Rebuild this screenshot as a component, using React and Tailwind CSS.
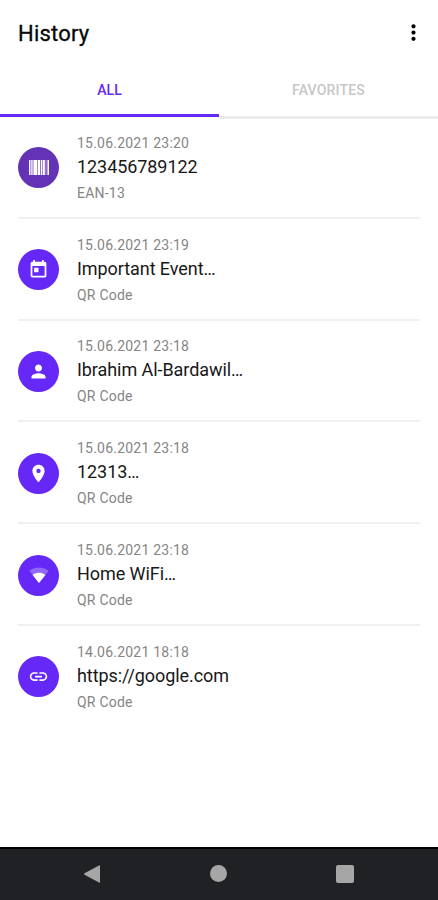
import React from "react";
import { MdMoreVert, MdToday, MdPerson, MdPlace, MdLink } from "react-icons/md";

function Barcode() {
  return (
    <svg width="20" height="15" viewBox="0 0 20 15" fill="#fff">
      <path fillOpacity=".3" d="M0 0h20v15H0z" />
      <path d="M0 0h1.300v15H0zM2.300 0h1.200v15H2.300zM4.500 0h3.500v15H4.500zM8.800 0h2.200v15H8.800zM12 0h1.200v15H12zM14 0h1.800v15H14zM18.600 0H20v15h-1.400z" />
    </svg>
  );
}

function Wifi() {
  return (
    <svg width="20" height="20" viewBox="0 0 24 24" fill="#fff">
      <path fillOpacity=".3" d="M12 21.500 23.600 7C23.200 6.700 18.700 3 12 3S.8 6.700.4 7z" />
      <path d="M4.300 12 12 21.500 19.700 12C19.300 11.700 16.400 9.300 12 9.300S4.700 11.700 4.300 12z" />
    </svg>
  );
}

const items = [
  { date: "15.06.2021 23:20", title: "123456789122", kind: "EAN-13", icon: <Barcode />, bg: "bg-[#6433b5]" },
  { date: "15.06.2021 23:19", title: "Important Event…", kind: "QR Code", icon: <MdToday size={21} />, bg: "bg-[#6528f7]" },
  { date: "15.06.2021 23:18", title: "Ibrahim Al-Bardawil…", kind: "QR Code", icon: <MdPerson size={21} />, bg: "bg-[#6528f7]" },
  { date: "15.06.2021 23:18", title: "12313…", kind: "QR Code", icon: <MdPlace size={21} />, bg: "bg-[#6528f7]" },
  { date: "15.06.2021 23:18", title: "Home WiFi…", kind: "QR Code", icon: <Wifi />, bg: "bg-[#6528f7]" },
  { date: "14.06.2021 18:18", title: "https://google.com", kind: "QR Code", icon: <MdLink size={21} />, bg: "bg-[#6528f7]" },
];

export default function App() {
  return (
    <div className="flex h-[900px] w-[438px] flex-col overflow-hidden bg-white font-[Roboto,sans-serif]">
      <header className="flex h-[64px] shrink-0 items-center justify-between pl-[18px] pr-[12px]">
        <h1 className="pt-[3px] text-[22px] leading-[26px] tracking-[0.2px] text-[#080808] [-webkit-text-stroke:0.3px_#080808]">History</h1>
        <MdMoreVert size={25} className="text-black" />
      </header>
      <nav className="flex h-[55px] shrink-0 text-[14px] font-medium">
        <div className="mb-[2px] flex flex-1 items-center justify-center border-b-[3px] border-[#6528f7] pt-[3px] text-[#6528f7]">ALL</div>
        <div className="flex flex-1 items-center justify-center border-b-[3px] border-[#ebebeb] pt-px tracking-[0.2px] text-[#c6c6c6]">FAVORITES</div>
      </nav>
      <main className="-mt-[2px] flex-1 px-[18px]">
        {items.map((it, i) => (
          <div key={i} className="flex h-[101.8px] items-center border-b-2 border-[#f0f0f0] pt-[2px] last:border-transparent">
            <div className={`flex size-[41px] items-center justify-center rounded-full text-white ${it.bg}`}>{it.icon}</div>
            <div className="ml-[18px] pt-[2px]">
              <div className="text-[14px] leading-[20px] tracking-[0.22px] text-[#858585]">{it.date}</div>
              <div className="text-[18px] leading-[28px] tracking-[-0.07px] text-[#181818]">{it.title}</div>
              <div className="text-[14px] leading-[24px] tracking-[0.22px] text-[#858585]">{it.kind}</div>
            </div>
          </div>
        ))}
      </main>
      <footer className="flex h-[53px] shrink-0 items-center justify-between border-t-2 border-black bg-[#202124] pb-[2px] pl-[83px] pr-[84px]">
        <svg width="18" height="18" viewBox="0 0 18 18" fill="#a6a6a6">
          <path d="M17 1v16q0 1-1 .5L1.500 9.700q-1-.7 0-1.400L16 .5q1-.5 1 .5z" />
        </svg>
        <div className="size-[17px] rounded-full bg-[#a6a6a6]" />
        <div className="size-[18px] rounded-[2px] bg-[#a6a6a6]" />
      </footer>
    </div>
  );
}
